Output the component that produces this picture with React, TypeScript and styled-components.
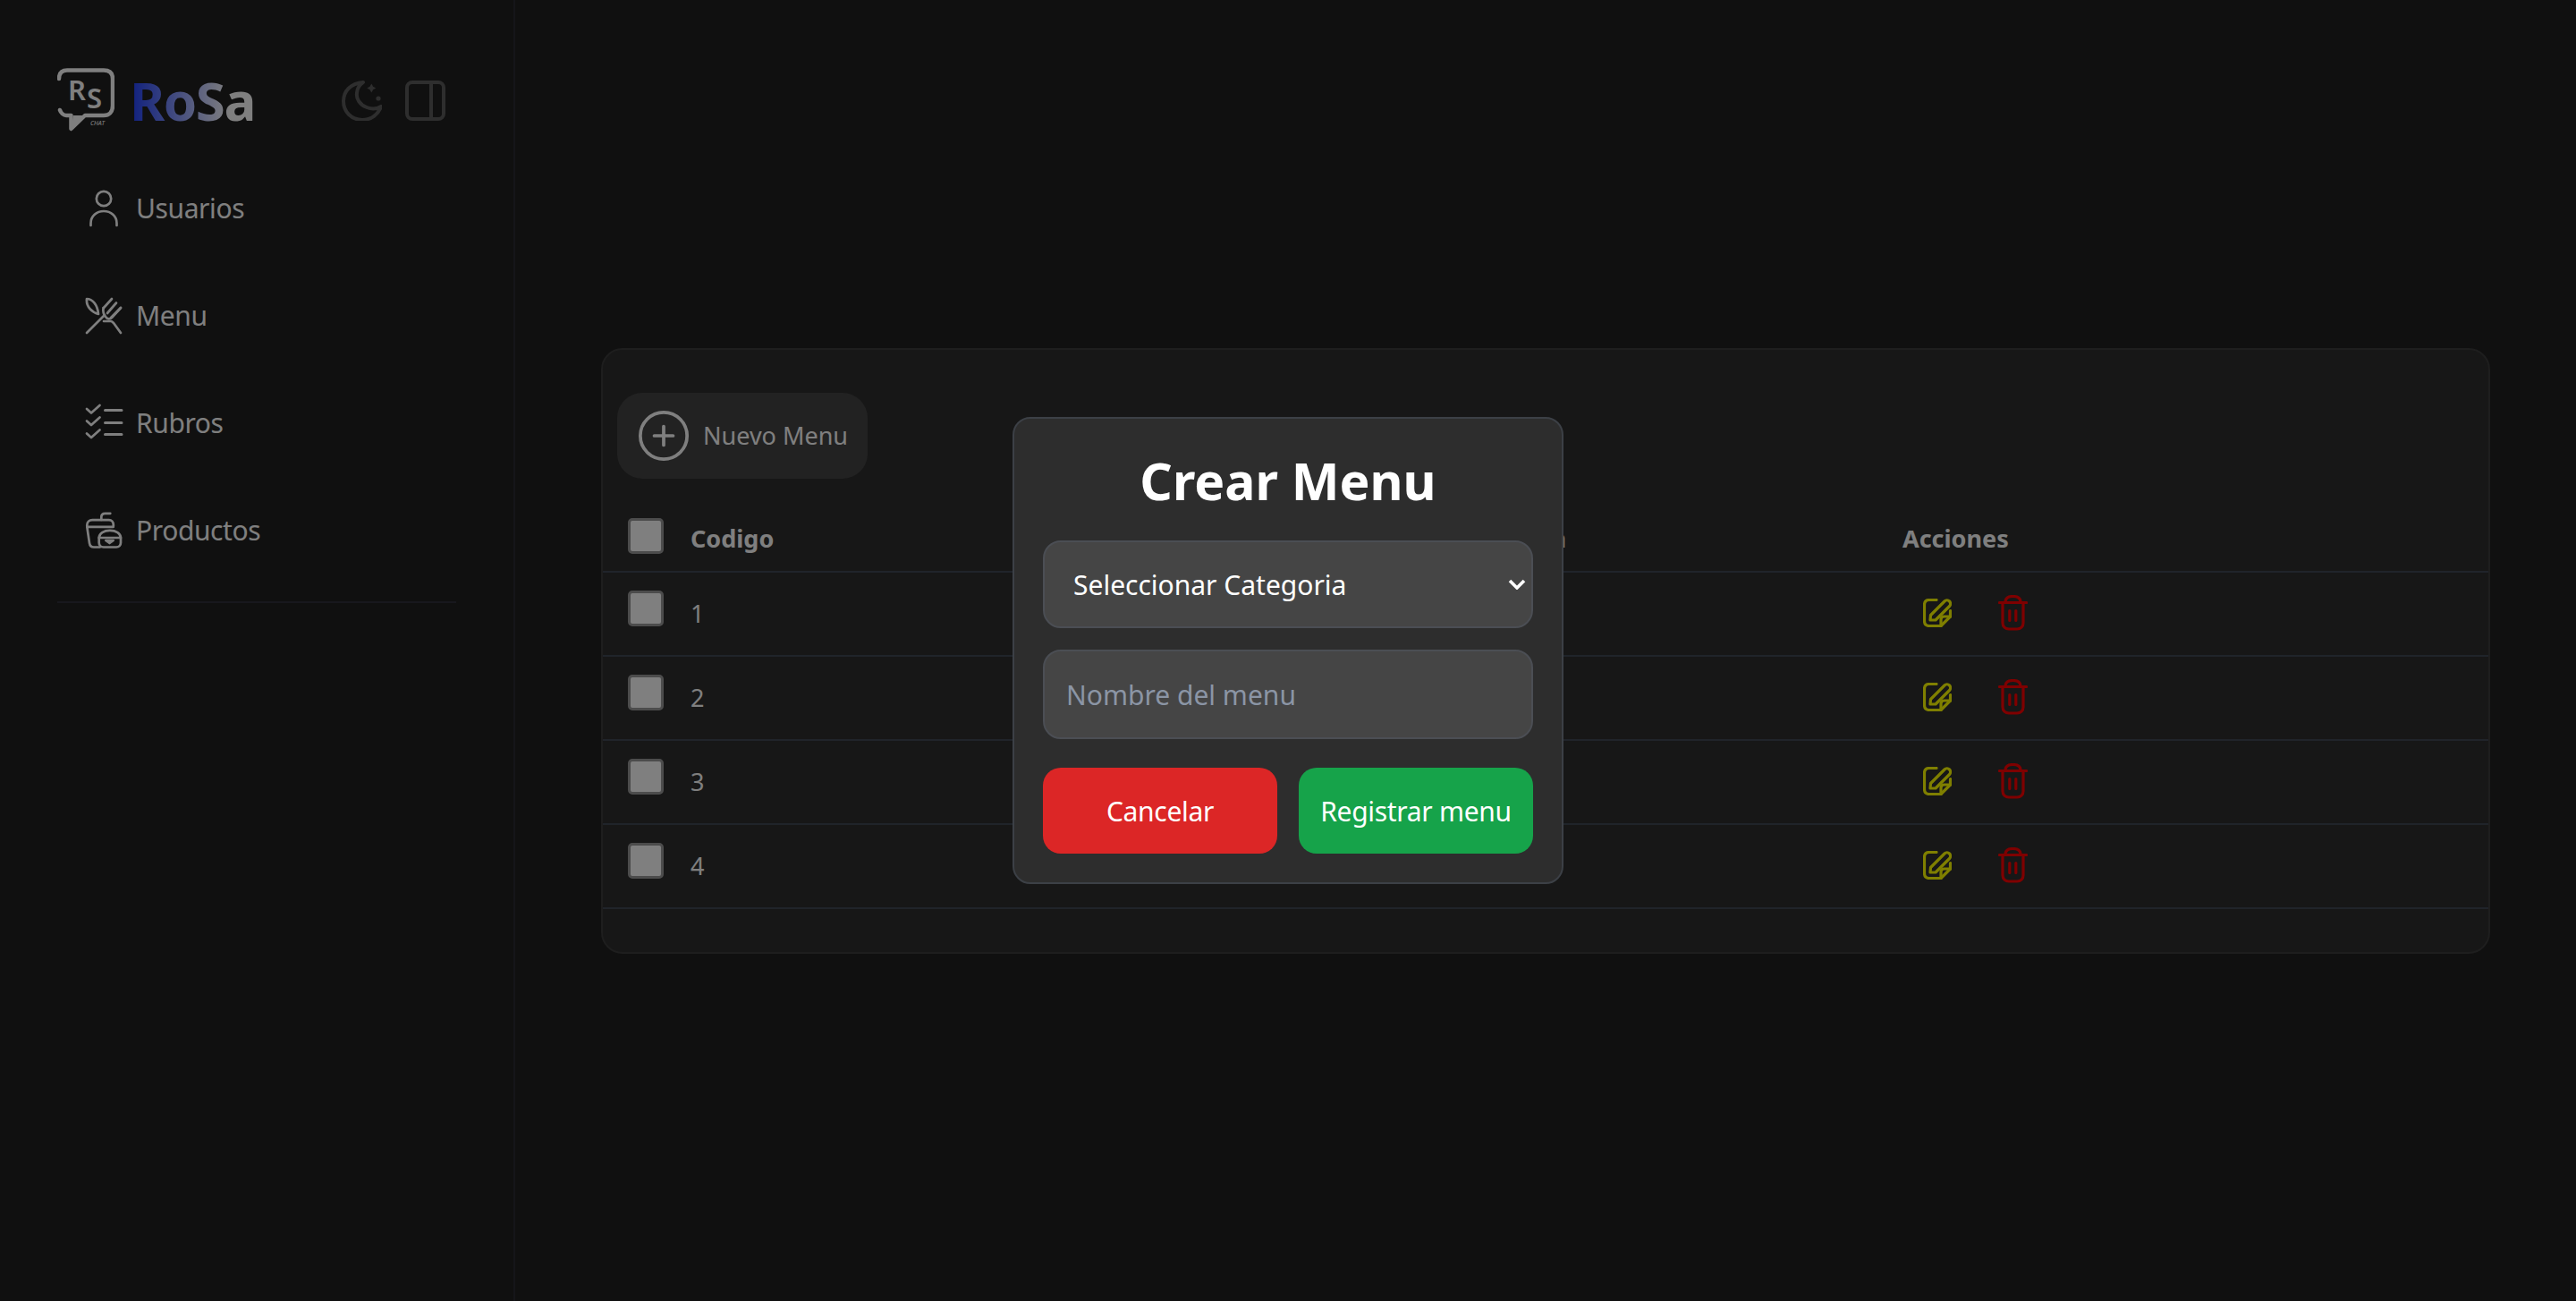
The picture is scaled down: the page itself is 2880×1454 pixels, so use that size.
import styled, { createGlobalStyle } from "styled-components";

const GlobalStyle = createGlobalStyle`
  html, body {
    margin: 0;
    padding: 0;
    background: #202020;
    font-family: "Noto Sans", "Open Sans", sans-serif;
  }
  * { box-sizing: border-box; }
`;

const rows = [1, 2, 3, 4];

const navItems = [
  { label: "Usuarios", icon: <UserIcon /> },
  { label: "Menu", icon: <UtensilsIcon /> },
  { label: "Rubros", icon: <ChecklistIcon /> },
  { label: "Productos", icon: <FoodIcon /> },
];

function UserIcon() {
  return (
    <NavSvg viewBox="0 0 43 43">
      <circle cx="21" cy="11" r="8.2" />
      <path d="M6.500 41v-2.500c0-8 6.500-13.500 14.500-13.500s14.500 5.500 14.500 13.500V41" />
    </NavSvg>
  );
}

function UtensilsIcon() {
  return (
    <NavSvg viewBox="0 0 43 43">
      <path d="M2 41 22 21" />
      <path d="M21 13 30 3M25 19 35 7.500M29 24 40 13" />
      <path d="M20.500 13c-.5 4 .5 8 2.500 10 2 3 5 3 7 1L40 13" />
      <path d="M2 3c6 0 12 6 13 17C8 18 1 12 2 3z" />
      <path d="M21 28h8c1 0 2 1 3 2l8 11" />
    </NavSvg>
  );
}

function ChecklistIcon() {
  return (
    <NavSvg viewBox="0 0 43 43">
      <path d="M2 6l5 4.500L16.500 2M2 19.500 7 24l9.500-8.500M2 33.500 7 38l9.500-8.500" />
      <path d="M22.500 7.500H41M22.500 21.500H41M22.500 34.500H41" strokeWidth="3" />
    </NavSvg>
  );
}

function FoodIcon() {
  return (
    <NavSvg viewBox="0 0 43 43">
      <path d="M18.300 10V7c0-2.500 1.700-4.200 4.200-4.200h5.800" />
      <path d="M2.300 17.500V16c0-3.500 2.500-5.800 6-5.800h18.500c3 0 5 2.200 5 5.300v1.500" />
      <path d="M2.300 17.800h29.500M2.300 17.800 5 36c.4 3 2.300 4.500 5 4.500h6.700" />
      <path d="M15.700 30c0-5 5.500-8.200 12.200-8.200S40 25 40 30z" />
      <path d="M15.700 30v5.500c0 3 2 5 5 5h14.300c3 0 5-2 5-5V30" />
      <path d="M23.300 33h8.400l-4.200 3z" fill="currentColor" />
    </NavSvg>
  );
}

function MoonIcon() {
  return (
    <TopSvg viewBox="0 0 45 45">
      <path d="M24 2C10 3 2 12 2 23c0 12 9 21 21 21 10 0 18-6 21-15-5 3-11 3-16 1-8-3-12-10-11-16 0-5 3-9 7-12z" />
      <path d="M33.300 3.500l1.800 3.200 3.200 1.800-3.200 1.800-1.800 3.200-1.800-3.200-3.200-1.800 3.200-1.800z" fill="currentColor" stroke="none" />
      <circle cx="41" cy="20" r="2.600" fill="currentColor" stroke="none" />
    </TopSvg>
  );
}

function PanelIcon() {
  return (
    <TopSvg viewBox="0 0 45 45">
      <rect x="2" y="2" width="41" height="41" rx="6" />
      <path d="M29 2v41" />
    </TopSvg>
  );
}

function PlusCircleIcon() {
  return (
    <PlusSvg viewBox="0 0 24 24">
      <circle cx="12" cy="12" r="11.200" />
      <path d="M12 7.500v9M7.500 12h9" />
    </PlusSvg>
  );
}

function EditIcon() {
  return (
    <EditSvg viewBox="0 0 32 32">
      <path d="M15 1.500H7C3.500 1.500 1.500 3.500 1.500 7v18c0 3.500 2 5.500 5.500 5.500h13L30.500 20v-6.500" />
      <path d="M8 24l.5-5.500L24 3c1.500-1.500 4-1.500 5.500 0s1.500 4 0 5.500L14 24z" />
      <path d="M20 30.500v-7c0-2 1.500-3.500 3.500-3.500h7" />
    </EditSvg>
  );
}

function TrashIcon() {
  return (
    <TrashSvg viewBox="0 0 33 40">
      <path d="M1.500 8.500h30M8 8c0-4.500 3-6.500 8.500-6.500S25 3.500 25 8" />
      <path d="M5 8.500V31c0 4.500 3 7 7 7h9c4 0 7-2.500 7-7V8.500" />
      <path d="M12.800 17.500v11M19.800 17.500v11" />
    </TrashSvg>
  );
}

const App = () => {
  return (
    <>
      <GlobalStyle />
      <Page>
        <Sidebar>
          <LogoRow>
            <LogoBrand>
              <LogoMark viewBox="0 0 64 72" fill="none">
                <path
                  d="M2 12C2 5 6 2.500 11 2.500h41c7 0 10 3.500 10 9.500v30c0 7-4 11-10 11H31L15.500 68V53H10c-3 0-6-3-7-6"
                  stroke="#ffffff"
                  strokeWidth="4.500"
                  strokeLinecap="round"
                  strokeLinejoin="round"
                />
                <path d="M18 53h12L15.500 68z" fill="#ffffff" />
                <LogoLetter x="12" y="36">R</LogoLetter>
                <LogoLetter x="33" y="44.500">S</LogoLetter>
                <LogoChat x="37" y="64">CHAT</LogoChat>
              </LogoMark>
              <LogoText>RoSa</LogoText>
            </LogoBrand>
            <TopIcons>
              <MoonIcon />
              <PanelIcon />
            </TopIcons>
          </LogoRow>
          <Nav>
            {navItems.map((item) => (
              <NavItem key={item.label}>
                {item.icon}
                {item.label}
              </NavItem>
            ))}
          </Nav>
          <Divider />
        </Sidebar>
        <Main>
          <Card>
            <NewButton>
              <PlusCircleIcon />
              Nuevo Menu
            </NewButton>
            <TableHead>
              <Check type="checkbox" />
              <HeadCell>Codigo</HeadCell>
              <HeadCell>Descripcion</HeadCell>
              <HeadCell>Acciones</HeadCell>
            </TableHead>
            {rows.map((row) => (
              <TableRow key={row}>
                <Check type="checkbox" />
                <Cell>{row}</Cell>
                <Cell />
                <Actions>
                  <EditIcon />
                  <TrashIcon />
                </Actions>
              </TableRow>
            ))}
          </Card>
        </Main>
        <Overlay />
        <Modal>
          <Title>Crear Menu</Title>
          <SelectWrap>
            <Select defaultValue="">
              <option value="">Seleccionar Categoria</option>
            </Select>
            <Chevron viewBox="0 0 20 12">
              <path d="M2 2l8 8 8-8" />
            </Chevron>
          </SelectWrap>
          <NameInput placeholder="Nombre del menu" />
          <ButtonRow>
            <ModalButton $bg="#dc2626">Cancelar</ModalButton>
            <ModalButton $bg="#16a34a">Registrar menu</ModalButton>
          </ButtonRow>
        </Modal>
      </Page>
    </>
  );
};

const Page = styled.div`
  display: flex;
  width: 100%;
  height: 1454px;
  overflow: hidden;
  background: #202020;
`;

const Sidebar = styled.aside`
  width: 576px;
  flex-shrink: 0;
  height: 100%;
  padding: 76px 64px 0 64px;
  border-right: 2px solid #2a2a33;
  display: flex;
  flex-direction: column;
`;

const LogoRow = styled.div`
  display: flex;
  align-items: center;
  justify-content: space-between;
  height: 72px;
`;

const LogoBrand = styled.div`
  display: flex;
  align-items: center;
  gap: 17px;
`;

const LogoMark = styled.svg`
  width: 64px;
  height: 72px;
`;

const LogoLetter = styled.text`
  fill: #ffffff;
  font-size: 31px;
  font-weight: 600;
`;

const LogoChat = styled.text`
  fill: #ffffff;
  font-size: 7px;
  font-style: italic;
`;

const LogoText = styled.span`
  font-size: 60px;
  font-weight: 700;
  letter-spacing: -1.5px;
  line-height: 72px;
  background: linear-gradient(90deg, #2040ff 0%, #ffffff 80%);
  -webkit-background-clip: text;
  background-clip: text;
  color: transparent;
`;

const TopIcons = styled.div`
  display: flex;
  align-items: center;
  gap: 26px;
  margin-right: 12px;
  color: #5c5c5c;
`;

const TopSvg = styled.svg`
  width: 45px;
  height: 45px;
  fill: none;
  stroke: currentColor;
  stroke-width: 4;
  stroke-linejoin: round;
`;

const Nav = styled.nav`
  display: flex;
  flex-direction: column;
  margin-top: 24px;
`;

const NavItem = styled.div`
  display: flex;
  align-items: center;
  height: 120px;
  padding-left: 31px;
  gap: 14px;
  font-size: 30px;
  letter-spacing: -0.4px;
  color: #ffffff;
`;

const NavSvg = styled.svg`
  width: 43px;
  height: 43px;
  flex-shrink: 0;
  fill: none;
  stroke: currentColor;
  stroke-width: 2.7;
  stroke-linecap: round;
  stroke-linejoin: round;
`;

const Divider = styled.hr`
  margin: 20px 0 0;
  border: 0;
  border-top: 2px solid #30303a;
`;

const Main = styled.main`
  flex: 1;
  min-width: 0;
  padding: 0 96px;
  display: flex;
  align-items: center;
`;

const Card = styled.section`
  width: 100%;
  height: 677px;
  padding-top: 48px;
  background: #2e2e2e;
  border: 2px solid #3c3c3c;
  border-radius: 24px;
  display: flex;
  flex-direction: column;
`;

const NewButton = styled.button`
  align-self: flex-start;
  display: flex;
  align-items: center;
  gap: 16px;
  width: 280px;
  height: 96px;
  margin-left: 16px;
  padding: 0 0 0 24px;
  border: 0;
  border-radius: 28px;
  background: #444444;
  color: #ffffff;
  font-family: inherit;
  font-size: 27px;
`;

const PlusSvg = styled.svg`
  width: 56px;
  height: 56px;
  fill: none;
  stroke: currentColor;
  stroke-width: 1.6;
  stroke-linecap: round;
`;

const gridColumns = "70px 822px 533px 1fr";

const TableHead = styled.div`
  display: grid;
  grid-template-columns: ${gridColumns};
  height: 105px;
  padding: 44px 0 0 28px;
  border-bottom: 2px solid #404854;
  font-size: 27px;
  font-weight: 700;
  color: #ffffff;
`;

const HeadCell = styled.span`
  line-height: 40px;
  padding-top: 3px;
`;

const TableRow = styled.div`
  display: grid;
  grid-template-columns: ${gridColumns};
  height: 94px;
  padding: 20px 0 0 28px;
  border-bottom: 2px solid #404854;
  font-size: 27px;
  color: #ffffff;
`;

const Cell = styled.span`
  line-height: 40px;
  padding-top: 6px;
`;

const Actions = styled.div`
  display: flex;
  align-items: center;
  gap: 52px;
  height: 50px;
  margin-left: 23px;
`;

const EditSvg = styled.svg`
  width: 32px;
  height: 32px;
  fill: none;
  stroke: #ffff00;
  stroke-width: 3.2;
  stroke-linecap: round;
  stroke-linejoin: round;
`;

const TrashSvg = styled.svg`
  width: 33px;
  height: 40px;
  fill: none;
  stroke: #ff0000;
  stroke-width: 3.2;
  stroke-linecap: round;
  stroke-linejoin: round;
`;

const Check = styled.input`
  appearance: none;
  width: 40px;
  height: 40px;
  margin: 0;
  background: #ffffff;
  border: 3px solid #999999;
  border-radius: 5px;
`;

const Overlay = styled.div`
  position: fixed;
  inset: 0;
  background: rgba(0, 0, 0, 0.5);
`;

const Modal = styled.div`
  position: fixed;
  left: 1132px;
  top: 466px;
  width: 616px;
  height: 522px;
  padding: 0 32px;
  background: #2d2d2d;
  border: 2px solid #3c4046;
  border-radius: 20px;
  display: flex;
  flex-direction: column;
`;

const Title = styled.h2`
  margin: 0;
  height: 136px;
  padding-top: 33px;
  text-align: center;
  font-size: 57px;
  line-height: 72px;
  font-weight: 700;
  color: #ffffff;
`;

const SelectWrap = styled.div`
  position: relative;
  height: 98px;
`;

const Select = styled.select`
  appearance: none;
  width: 100%;
  height: 100%;
  padding: 0 32px;
  background: #454545;
  border: 2px solid #4b4e54;
  border-radius: 20px;
  color: #ffffff;
  font-family: inherit;
  font-size: 30px;
`;

const Chevron = styled.svg`
  position: absolute;
  right: 8px;
  top: 43px;
  width: 20px;
  height: 12px;
  fill: none;
  stroke: #ffffff;
  stroke-width: 3.6;
  pointer-events: none;
`;

const NameInput = styled.input`
  width: 100%;
  height: 100px;
  margin-top: 24px;
  padding: 0 24px;
  background: #454545;
  border: 2px solid #4b4e54;
  border-radius: 20px;
  color: #ffffff;
  font-family: inherit;
  font-size: 30px;

  &::placeholder {
    color: #8b95a5;
  }
`;

const ButtonRow = styled.div`
  display: flex;
  gap: 24px;
  margin-top: 32px;
`;

const ModalButton = styled.button<{ $bg: string }>`
  flex: 1;
  height: 96px;
  border: 0;
  border-radius: 20px;
  background: ${(props) => props.$bg};
  color: #ffffff;
  font-family: inherit;
  font-size: 30px;
  letter-spacing: -0.3px;
`;

export default App;
